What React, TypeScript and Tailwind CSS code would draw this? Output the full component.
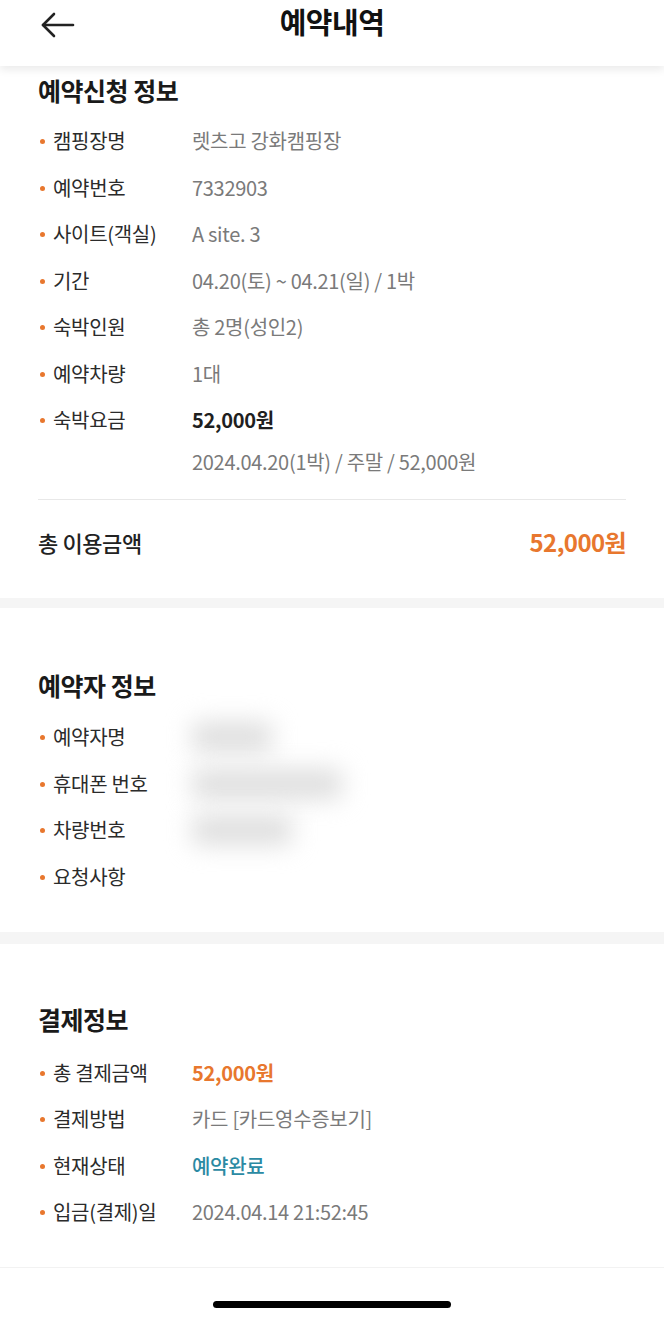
import React from 'react';

const font = { fontFamily: '"Noto Sans CJK KR", "Noto Sans", sans-serif' };

type Row = { label: string; value?: React.ReactNode; sub?: string };

const bookingRows: Row[] = [
  { label: '캠핑장명', value: '렛츠고 강화캠핑장' },
  { label: '예약번호', value: '7332903' },
  { label: '사이트(객실)', value: 'A site. 3' },
  { label: '기간', value: '04.20(토) ~ 04.21(일) / 1박' },
  { label: '숙박인원', value: '총 2명(성인2)' },
  { label: '예약차량', value: '1대' },
  {
    label: '숙박요금',
    value: <span className="font-semibold text-[#1f1f1f]">52,000원</span>,
    sub: '2024.04.20(1박) / 주말 / 52,000원',
  },
];

const blurWidths = [80, 150, 100, 0];

const reserverRows = ['예약자명', '휴대폰 번호', '차량번호', '요청사항'];

const paymentRows: Row[] = [
  { label: '총 결제금액', value: <span className="font-bold text-[#e8772e]">52,000원</span> },
  { label: '결제방법', value: '카드 [카드영수증보기]' },
  { label: '현재상태', value: <span className="font-medium text-[#2b8aa3]">예약완료</span> },
  { label: '입금(결제)일', value: '2024.04.14 21:52:45' },
];

function InfoRow({ row }: { row: Row }) {
  return (
    <div className="flex">
      <div className="flex w-[154px] shrink-0 items-start">
        <span className="mt-[12px] mr-[8px] ml-[2px] h-[5px] w-[5px] rounded-full bg-[#e8772e]" />
        <span className="text-[20px] leading-[28px] tracking-[-0.3px] text-[#2b2b2b]">{row.label}</span>
      </div>
      <div className="flex flex-col gap-[14px]">
        <div className="flex h-[28px] items-center text-[20px] leading-[28px] tracking-[-0.3px] text-[#7a7a7a]">
          {row.value}
        </div>
        {row.sub && <div className="text-[20px] leading-[28px] tracking-[-0.3px] text-[#7a7a7a]">{row.sub}</div>}
      </div>
    </div>
  );
}

function SectionTitle({ children }: { children: React.ReactNode }) {
  return <h2 className="text-[25px] leading-[32px] font-bold tracking-[-0.5px] text-[#1a1a1a]">{children}</h2>;
}

export default function App() {
  return (
    <div style={font} className="flex min-h-[1322px] w-[664px] flex-col bg-white">
      {/* header */}
      <div className="relative z-10 flex h-[66px] items-start justify-center bg-white pt-[2px] shadow-[0_4px_8px_rgba(0,0,0,0.08)]">
        <button className="absolute top-[6px] left-[36px] p-1">
          <svg width="36" height="30" viewBox="0 0 36 30" fill="none" stroke="#222" strokeWidth="2.6" strokeLinecap="round" strokeLinejoin="round">
            <path d="M33 15H3" />
            <path d="M14 4L3 15L14 26" />
          </svg>
        </button>
        <h1 className="text-[29px] leading-[38px] font-bold tracking-[-0.5px] text-[#111]">예약내역</h1>
      </div>

      {/* 예약신청 정보 */}
      <section className="px-[38px] pt-[8px] pb-[40px]">
        <SectionTitle>예약신청 정보</SectionTitle>
        <div className="mt-[21px] flex flex-col gap-[18.5px]">
          {bookingRows.map((row) => (
            <InfoRow key={row.label} row={row} />
          ))}
        </div>
        <div className="mt-[23px] h-px bg-[#e8e8e8]" />
        <div className="mt-[26px] flex items-center justify-between">
          <span className="text-[22px] leading-[32px] font-medium tracking-[-0.4px] text-[#222]">총 이용금액</span>
          <span className="text-[24px] leading-[32px] font-bold tracking-[-0.6px] text-[#e8772e]">52,000원</span>
        </div>
      </section>

      <div className="h-[10px] bg-[#f5f5f5]" />

      {/* 예약자 정보 */}
      <section className="px-[38px] pt-[61px] pb-[41px]">
        <SectionTitle>예약자 정보</SectionTitle>
        <div className="mt-[22px] flex flex-col gap-[18.5px]">
          {reserverRows.map((label, i) => (
            <InfoRow
              key={label}
              row={{
                label,
                value: blurWidths[i] ? (
                  <span
                    className="block h-[30px] rounded-md bg-[#dedede] blur-[12px]"
                    style={{ width: blurWidths[i] }}
                  />
                ) : null,
              }}
            />
          ))}
        </div>
      </section>

      <div className="h-[12px] bg-[#f5f5f5]" />

      {/* 결제정보 */}
      <section className="px-[38px] pt-[59px] pb-[41px]">
        <SectionTitle>결제정보</SectionTitle>
        <div className="mt-[24px] flex flex-col gap-[18.5px]">
          {paymentRows.map((row) => (
            <InfoRow key={row.label} row={row} />
          ))}
        </div>
      </section>

      {/* bottom bar */}
      <div className="flex flex-1 justify-center border-t border-[#f2f2f2] pt-[33px]">
        <div className="h-[7px] w-[238px] rounded-full bg-black" />
      </div>
    </div>
  );
}
